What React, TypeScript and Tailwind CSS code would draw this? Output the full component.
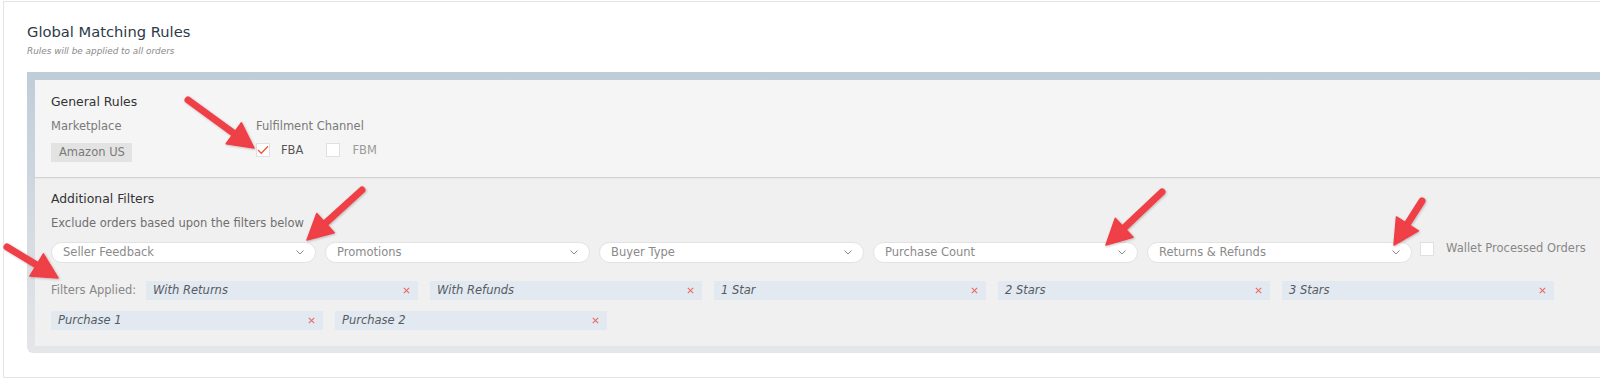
import React from "react";

type Pt = [number, number];

function Arrow({ tail, tip }: { tail: Pt; tip: Pt }) {
  const dx = tip[0] - tail[0];
  const dy = tip[1] - tail[1];
  const len = Math.sqrt(dx * dx + dy * dy);
  const ux = dx / len;
  const uy = dy / len;
  const L = 25;
  const W = 13;
  const nx = -uy;
  const ny = ux;
  const neck: Pt = [tip[0] - ux * L, tip[1] - uy * L];
  const p1: Pt = [neck[0] + nx * W, neck[1] + ny * W];
  const p2: Pt = [neck[0] - nx * W, neck[1] - ny * W];
  return (
    <g filter="url(#arrowShadow)">
      <line
        x1={tail[0]}
        y1={tail[1]}
        x2={neck[0] + ux * 3}
        y2={neck[1] + uy * 3}
        stroke="#ef3f47"
        strokeWidth={7}
        strokeLinecap="round"
      />
      <polygon
        points={`${tip[0]},${tip[1]} ${p1[0]},${p1[1]} ${p2[0]},${p2[1]}`}
        fill="#ef3f47"
        stroke="#ef3f47"
        strokeWidth={1.5}
        strokeLinejoin="round"
      />
    </g>
  );
}

function Chevron() {
  return (
    <svg width="8" height="5" viewBox="0 0 8 5" className="shrink-0">
      <path d="M0.5 0.5 L4 4 L7.5 0.5" fill="none" stroke="#8a8a8a" strokeWidth="1" />
    </svg>
  );
}

function Dropdown({ label }: { label: string }) {
  return (
    <div className="w-[265px] h-[21px] shrink-0 rounded-full bg-white border border-[#e2e2e2] flex items-center justify-between pl-[11px] pr-[11px]">
      <span className="text-[11.5px] text-[#8a8a8a] leading-none whitespace-nowrap">{label}</span>
      <Chevron />
    </div>
  );
}

function Chip({ label }: { label: string }) {
  return (
    <div className="w-[272px] h-[19px] shrink-0 bg-[#e3e9f0] flex items-center justify-between pl-[7px] pr-[8px]">
      <span className="text-[11.5px] italic text-[#555b62] leading-none whitespace-nowrap">{label}</span>
      <svg width="7" height="7" viewBox="0 0 7 7">
        <path d="M0.8 0.8 L6.2 6.2 M6.2 0.8 L0.8 6.2" stroke="#ec6a62" strokeWidth="1.1" />
      </svg>
    </div>
  );
}

export default function App() {
  return (
    <div className="relative w-[1600px] h-[391px] overflow-hidden bg-white font-['DejaVu_Sans',sans-serif]">
      <div className="ml-[3px] mt-[1px] w-[1650px] border-l border-t border-b border-[#e4e4e4] pl-[23px] pt-[20px] pb-[24px]">
        <div className="text-[14.7px] leading-[20px] text-[#2d3a48]">Global Matching Rules</div>
        <div className="mt-[3px] text-[8.9px] leading-[12px] italic text-[#8a8a8a]">
          Rules will be applied to all orders
        </div>

        <div className="mt-[15px] w-[1600px] bg-linear-to-b from-[#bfcdd9] to-[#e5e6e8] pt-[8px] pl-[8px] pb-[7px] rounded-bl-[6px]">
          {/* General Rules */}
          <div className="bg-[#f5f5f5] h-[98px] pl-[16px] pt-[14px] border-b border-[#d3d3d3]">
            <div className="text-[12.4px] leading-[16px] text-[#333]">General Rules</div>
            <div className="flex mt-[8px]">
              <div className="w-[205px]">
                <div className="text-[11.5px] leading-[16px] text-[#7a7a7a]">Marketplace</div>
                <div className="mt-[9px] w-[81px] h-[19px] bg-[#e3e3e3] flex items-center pl-[8px] text-[11.5px] text-[#7a7a7a] leading-none">
                  Amazon US
                </div>
              </div>
              <div>
                <div className="text-[11.5px] leading-[16px] text-[#7a7a7a]">Fulfilment Channel</div>
                <div className="mt-[9px] flex items-start">
                  <div className="w-[14px] h-[14px] bg-white border border-[#e0e0e0] flex items-center justify-center">
                    <svg width="12" height="10" viewBox="0 0 12 10">
                      <path d="M1 5 L4.3 8.3 L11 1.2" fill="none" stroke="#f0553d" strokeWidth="1.3" />
                    </svg>
                  </div>
                  <span className="ml-[11px] text-[11.5px] leading-[15px] text-[#555]">FBA</span>
                  <div className="ml-[23px] w-[14px] h-[14px] bg-white border border-[#e0e0e0]" />
                  <span className="ml-[12px] text-[11.5px] leading-[15px] text-[#9a9a9a]">FBM</span>
                </div>
              </div>
            </div>
          </div>

          {/* Additional Filters */}
          <div className="bg-[#f0f0f0] border-t border-[#e9e9e9] pl-[16px] pt-[12px] pb-[16px]">
            <div className="text-[12.4px] leading-[16px] text-[#333]">Additional Filters</div>
            <div className="mt-[8px] text-[11.5px] leading-[16px] text-[#6f6f6f]">
              Exclude orders based upon the filters below
            </div>
            <div className="mt-[11px] flex items-start gap-[9px]">
              <Dropdown label="Seller Feedback" />
              <Dropdown label="Promotions" />
              <Dropdown label="Buyer Type" />
              <Dropdown label="Purchase Count" />
              <Dropdown label="Returns & Refunds" />
              <div className="flex items-start ml-[-1px] shrink-0">
                <div className="w-[14px] h-[14px] bg-white border border-[#e0e0e0]" />
                <span className="ml-[12px] text-[11.5px] leading-[12px] text-[#888] whitespace-nowrap">Wallet Processed Orders</span>
              </div>
            </div>
            <div className="mt-[18px] flex items-center gap-[12px]">
              <div className="w-[83px] shrink-0 whitespace-nowrap text-[11.5px] leading-none text-[#888]">Filters Applied:</div>
              <Chip label="With Returns" />
              <Chip label="With Refunds" />
              <Chip label="1 Star" />
              <Chip label="2 Stars" />
              <Chip label="3 Stars" />
            </div>
            <div className="mt-[11px] flex items-center gap-[12px]">
              <Chip label="Purchase 1" />
              <Chip label="Purchase 2" />
            </div>
          </div>
        </div>
      </div>

      <svg className="absolute left-0 top-0 pointer-events-none" width="1600" height="391">
        <defs>
          <filter id="arrowShadow" x="-20%" y="-20%" width="140%" height="140%">
            <feDropShadow dx="0.8" dy="0.8" stdDeviation="0.8" floodColor="#000" floodOpacity="0.25" />
          </filter>
        </defs>
        <Arrow tail={[188, 100]} tip={[254, 148]} />
        <Arrow tail={[362, 190]} tip={[307, 240]} />
        <Arrow tail={[7, 247]} tip={[58, 278]} />
        <Arrow tail={[1162, 192]} tip={[1106, 245]} />
        <Arrow tail={[1422, 201]} tip={[1394, 245]} />
      </svg>
    </div>
  );
}
